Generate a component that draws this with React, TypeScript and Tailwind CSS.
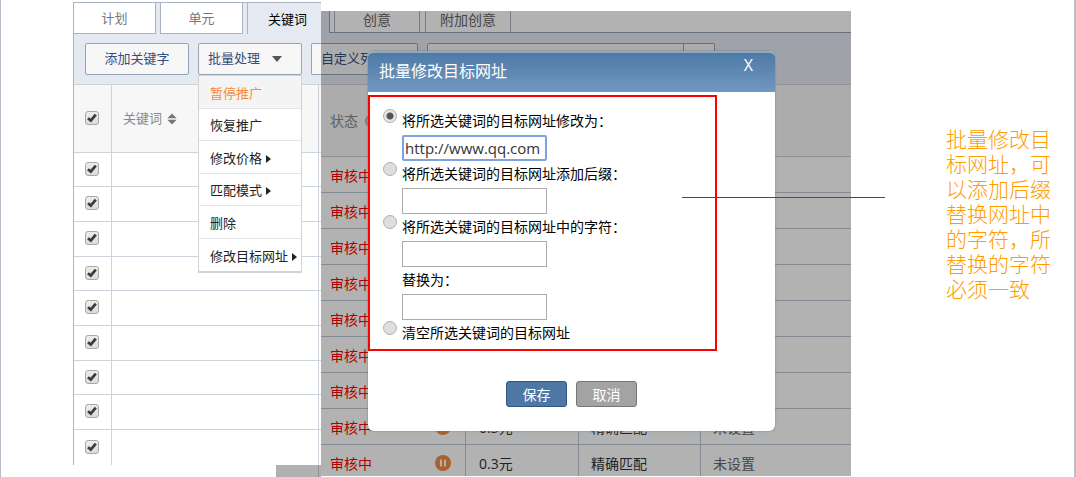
import { useState } from "react";

const menuItems = [
  { label: "暂停推广", submenu: false },
  { label: "恢复推广", submenu: false },
  { label: "修改价格", submenu: true },
  { label: "匹配模式", submenu: true },
  { label: "删除", submenu: false },
  { label: "修改目标网址", submenu: true },
];

const rows = [1, 2, 3, 4, 5, 6, 7, 8, 9];

const statuses = [
  { id: 1, status: "审核中" },
  { id: 2, status: "审核中" },
  { id: 3, status: "审核中" },
  { id: 4, status: "审核中" },
  { id: 5, status: "审核中" },
  { id: 6, status: "审核中" },
  { id: 7, status: "审核中" },
  { id: 8, status: "审核中", price: "0.3元", match: "精确匹配", url: "未设置" },
  { id: 9, status: "审核中", price: "0.3元", match: "精确匹配", url: "未设置" },
];

function Tick({ label }: { label: string }) {
  const [checked, setChecked] = useState(true);
  return (
    <span className="relative inline-flex align-middle">
      <input
        type="checkbox"
        aria-label={label}
        checked={checked}
        onChange={() => setChecked(!checked)}
        className="h-[14px] w-[14px] appearance-none rounded-[3px] border border-[#a9a9a9] bg-gradient-to-b from-[#ededed] to-[#dcdcdc]"
      />
      {checked && (
        <svg viewBox="0 0 14 14" className="pointer-events-none absolute inset-0 h-full w-full">
          <path d="M3 7.2 L5.8 9.6 L10.8 3.6" fill="none" stroke="#3c3c3c" strokeWidth="2.8" />
        </svg>
      )}
    </span>
  );
}

function PauseIcon() {
  return (
    <svg viewBox="0 0 16 16" className="ml-auto block h-4 w-4">
      <circle cx="8" cy="8" r="8" fill="#f38b45" />
      <rect x="5" y="4.5" width="2" height="7" fill="#fff" />
      <rect x="9" y="4.5" width="2" height="7" fill="#fff" />
    </svg>
  );
}

function BatchMenu() {
  return (
    <ul className="absolute top-full left-0 z-10 w-full border border-b-2 border-[#d3d3d3] bg-white">
      {menuItems.map((item, index) => (
        <li key={item.label} className="border-b border-[#e4e4e4] last:border-b-0 odd:h-[33px] even:h-8">
          <button
            type="button"
            className={
              index === 0
                ? "flex h-full w-full items-center bg-[#f4f4f4] pt-[3px] pl-[11px] text-[#fb8836]"
                : "flex h-full w-full items-center gap-1 pt-[3px] pl-[11px] whitespace-nowrap text-[#222]"
            }
          >
            {item.label}
            {item.submenu && (
              <svg viewBox="0 0 5 8" className="h-2 w-[5px] shrink-0">
                <path d="M0 0 L5 4 L0 8 Z" fill="#222" />
              </svg>
            )}
          </button>
        </li>
      ))}
    </ul>
  );
}

function KeywordPanel() {
  return (
    <section className="w-[248px] shrink-0 pt-[2px]">
      <div className="border-l border-[#a9b3c1] bg-white">
        <nav className="flex h-8 gap-1 border-t border-[#a9b3c1] bg-[#e4e9f2] text-[13px] text-[#777]">
          <button type="button" className="w-[82px] border-r border-b border-[#a9b3c1] bg-white pt-[2px]">
            计划
          </button>
          <button type="button" className="w-[83px] border border-t-0 border-[#a9b3c1] bg-white pt-[2px]">
            单元
          </button>
          <button type="button" className="flex-1 border-l border-[#a9b3c1] pt-[2px] pl-[6px] text-black">
            关键词
          </button>
        </nav>
        <div className="flex h-[50px] items-center gap-[9px] bg-[#e4e9f2] pl-[11px] text-[13px] text-[#344e7c]">
          <button type="button" className="h-8 w-[104px] shrink-0 rounded-xs border border-[#95a4b7] bg-[#f7f7f7]">
            添加关键字
          </button>
          <div className="relative w-[104px] shrink-0">
            <button
              type="button"
              className="flex h-8 w-full items-center gap-3 rounded-xs border border-[#95a4b7] bg-[#f7f7f7] pl-[9px]"
            >
              批量处理
              <svg viewBox="0 0 10 6" className="h-[6px] w-[10px]">
                <path d="M0 0 H10 L5 6 Z" fill="#555" />
              </svg>
            </button>
            <BatchMenu />
          </div>
          <div className="h-8 flex-1 rounded-l-xs border border-r-0 border-[#95a4b7] bg-[#f7f7f7]" />
        </div>
        <table className="w-full table-fixed border-separate border-spacing-0 text-[13px]">
          <colgroup>
            <col className="w-[38px]" />
            <col />
            <col className="w-[2px]" />
          </colgroup>
          <thead>
            <tr className="h-[69px] bg-[#f7f7f7]">
              <th className="border-y border-r border-[#cdd3dc] p-0 pr-[2px] pb-[3px]">
                <Tick label="全选" />
              </th>
              <th className="border-y border-r border-[#cdd3dc] p-0 pl-[11px] text-left font-normal text-[#888]">
                <span className="flex items-center gap-[5px]">
                  关键词
                  <svg viewBox="0 0 10 12" className="h-3 w-[10px]">
                    <path d="M5 0.5 L9.6 5.2 H0.4 Z M0.4 6.8 H9.6 L5 11.5 Z" fill="#777" />
                  </svg>
                </span>
              </th>
              <th className="border-y border-[#cdd3dc] p-0" />
            </tr>
          </thead>
          <tbody>
            {rows.map((row) => (
              <tr key={row} className="group h-[35px] nth-[3n+1]:h-[34px]">
                <td className="border-r border-b border-[#cdd3dc] p-0 pr-[2px] pb-[3px] text-center group-last:border-b-0">
                  <Tick label={`关键词 ${row}`} />
                </td>
                <td className="border-r border-b border-[#cdd3dc] p-0 group-last:border-b-0" />
                <td className="border-b border-[#cdd3dc] p-0 group-last:border-b-0" />
              </tr>
            ))}
          </tbody>
        </table>
      </div>
      <div className="ml-auto h-3 w-[45px] bg-[#b1b1b1] pr-[2px]">
        <div className="h-full border-r border-[#8b9299]" />
      </div>
    </section>
  );
}

function UrlDialog() {
  const [mode, setMode] = useState("replace");
  const [url, setUrl] = useState("http://www.qq.com");
  const option = "flex h-[27px] items-start gap-[5px]";
  const radio =
    "mt-px h-[14px] w-[14px] shrink-0 appearance-none rounded-full border border-[#b0b0b0] bg-[#dedede] checked:bg-[radial-gradient(circle,#555_0_3px,#e6e6e6_4px)]";
  const field = "ml-[19px] block h-[26px] w-[145px] border border-[#ababab] bg-white px-[2px]";

  return (
    <div
      role="dialog"
      aria-labelledby="dialog-title"
      className="absolute top-10 left-[47px] w-[407px] rounded-md bg-white pb-[24px] shadow-[0_0_2px_0_#777]"
    >
      <header className="flex h-[41px] justify-between rounded-t-md border-t-2 border-b border-t-[#88a9c9] border-b-[#8296a8] bg-gradient-to-b from-[#4d7aa5] to-[#7197bf] pr-[22px] pl-[11px] text-white">
        <h2 id="dialog-title" className="text-base leading-[36px]">
          批量修改目标网址
        </h2>
        <button type="button" aria-label="关闭" className="h-6 font-['Open_Sans',sans-serif] text-base">
          X
        </button>
      </header>
      <form className="text-sm text-black">
        <div className="mt-[3px] w-[349px] border-2 border-[#f00] pt-[11px] pb-[2px] pl-[13px] leading-[25px]">
          <label className={option}>
            <input type="radio" name="mode" className={radio} checked={mode === "replace"} onChange={() => setMode("replace")} />
            将所选关键词的目标网址修改为：
          </label>
          <input
            type="text"
            aria-label="目标网址"
            value={url}
            onChange={(e) => setUrl(e.target.value)}
            className="ml-[19px] block h-[26px] w-[145px] rounded-xs border-2 border-[#7da2e0] bg-white px-px font-['Open_Sans',sans-serif] text-[15px] text-[#333] outline-none"
          />
          <label className={option}>
            <input type="radio" name="mode" className={radio} checked={mode === "suffix"} onChange={() => setMode("suffix")} />
            将所选关键词的目标网址添加后缀：
          </label>
          <input type="text" aria-label="后缀" className={field} />
          <label className={option}>
            <input type="radio" name="mode" className={radio} checked={mode === "chars"} onChange={() => setMode("chars")} />
            将所选关键词的目标网址中的字符：
          </label>
          <input type="text" aria-label="字符" className={field} />
          <label htmlFor="replacement" className="ml-[19px] block h-[27px]">
            替换为：
          </label>
          <input id="replacement" type="text" className={field} />
          <label className={option}>
            <input type="radio" name="mode" className={radio} checked={mode === "clear"} onChange={() => setMode("clear")} />
            清空所选关键词的目标网址
          </label>
        </div>
        <div className="mt-[30px] flex justify-center gap-[9px] text-white">
          <button type="button" className="h-[26px] w-[61px] rounded-[3px] border border-[#2f5580] bg-[#4d78a5] pt-[2px]">
            保存
          </button>
          <button type="button" className="h-[26px] w-[61px] rounded-[3px] border border-[#777] bg-[#a3a3a3] pt-[2px]">
            取消
          </button>
        </div>
      </form>
    </div>
  );
}

function StatusPanel() {
  return (
    <section className="relative mt-[11px] max-h-[465px] min-w-0 flex-1 overflow-hidden bg-white">
      <nav className="flex h-[22px] bg-[#e4e9f2] pl-2 text-sm text-[#666]">
        <div className="flex flex-1 gap-[5px] border-b border-l border-[#95a4b7] bg-white pl-1">
          <button type="button" className="w-[86px] border-x border-[#a9b3c1] pb-1 leading-[14px]">
            创意
          </button>
          <button type="button" className="w-[86px] border-x border-[#a9b3c1] pb-1 leading-[14px]">
            附加创意
          </button>
        </div>
      </nav>
      <div className="flex h-[51px] items-center gap-[9px] bg-[#e4e9f2] text-[13px] text-[#344e7c]">
        <button type="button" className="h-8 w-[97px] rounded-r-xs border border-l-0 border-[#95a4b7] bg-[#f7f7f7] text-left">
          自定义列
        </button>
        <div className="flex h-8 w-[288px] rounded-xs border border-[#95a4b7] bg-[#f7f7f7]">
          <input type="text" aria-label="搜索" className="min-w-0 flex-1" />
          <button type="button" aria-label="搜索" className="w-[31px] border-l border-[#95a4b7]" />
        </div>
      </div>
      <table className="w-full table-fixed border-separate border-spacing-0 text-sm text-[#333]">
        <colgroup>
          <col className="w-[92px]" />
          <col className="w-[53px]" />
          <col className="w-[113px]" />
          <col className="w-[122px]" />
          <col />
        </colgroup>
        <thead>
          <tr className="h-[73px] bg-[#f7f7f7]">
            <th colSpan={5} className="border-y border-[#cdd3dc] p-0 pl-[9px] text-left font-normal text-[#888]">
              <span className="flex items-center gap-[7px]">
                状态
                <svg viewBox="0 0 14 14" className="h-[14px] w-[14px]">
                  <circle cx="7" cy="7" r="6.5" fill="#c4c4c4" stroke="#aaa" />
                </svg>
              </span>
            </th>
          </tr>
        </thead>
        <tbody>
          {statuses.map((row) => (
            <tr key={row.id} className="h-9">
              <td className="border-b border-[#bcc8d6] p-0 pt-[2px] pl-[9px] text-[#f00]">{row.status}</td>
              <td className="border-r border-b border-[#bcc8d6] p-0 pr-[14px]">
                <PauseIcon />
              </td>
              <td className="border-r border-b border-[#bcc8d6] p-0 pt-[2px] pl-[13px]">{row.price}</td>
              <td className="border-r border-b border-[#bcc8d6] p-0 pt-[2px] pl-3">{row.match}</td>
              <td className="border-b border-[#bcc8d6] p-0 pt-[2px] pl-3 text-[#666]">{row.url}</td>
            </tr>
          ))}
        </tbody>
      </table>
      <div className="absolute inset-0 bg-black/30" />
      <UrlDialog />
    </section>
  );
}

export default function App() {
  return (
    <main className="flex min-h-screen items-start border-r-2 border-l border-r-[#b9bec8] border-l-[#b9b9c8] bg-white pl-[72px] font-['Open_Sans','Noto_Sans_CJK_SC',sans-serif]">
      <KeywordPanel />
      <StatusPanel />
      <aside className="relative w-[223px] shrink-0 pt-[127px] pr-[22px] pl-[95px] text-[21px] leading-[25px] font-light text-[#ff9c00]">
        <div className="absolute top-[197px] right-[189px] h-px w-[203px] bg-[#f00]" />
        <p>批量修改目标网址，可以添加后缀替换网址中的字符，所替换的字符必须一致</p>
      </aside>
    </main>
  );
}
